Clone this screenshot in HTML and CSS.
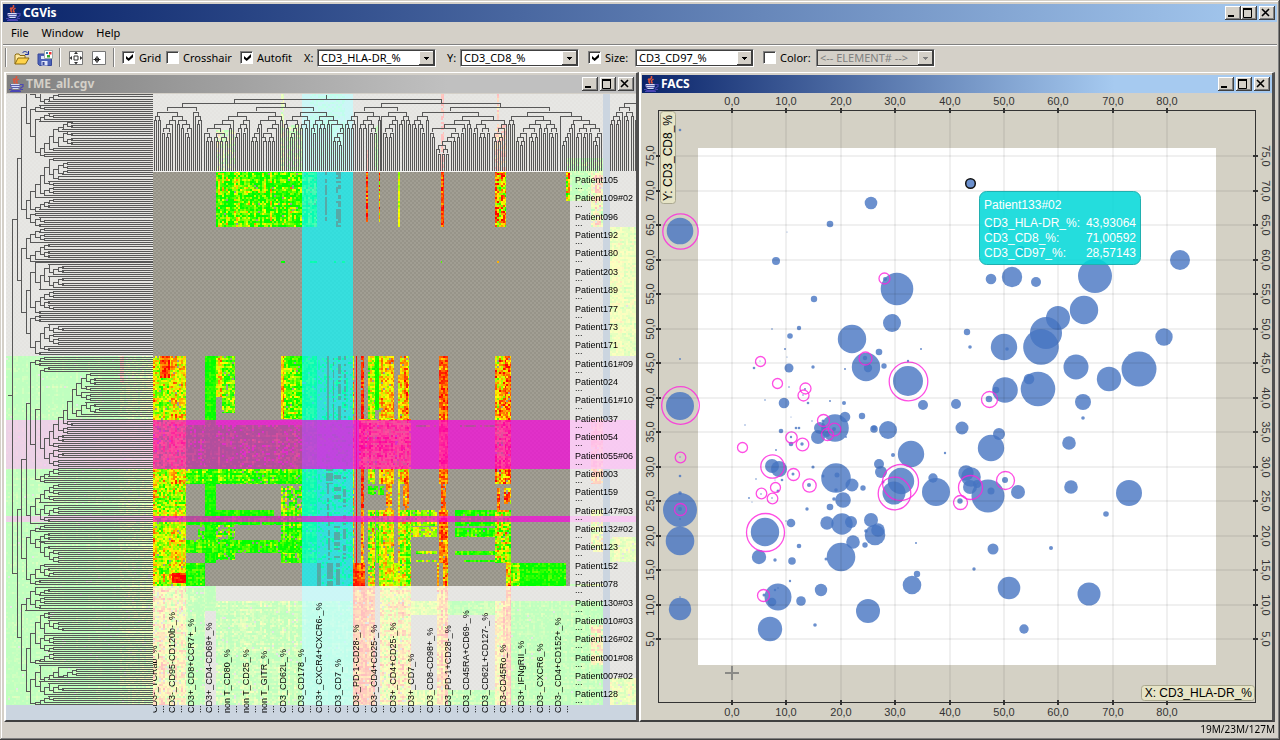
FILE: index.html
```html
<!DOCTYPE html>
<html lang="en">
<head>
<meta charset="utf-8">
<title>CGVis</title>
<link rel="stylesheet" href="styles.css">
</head>
<body>
<svg class="defs" width="0" height="0" aria-hidden="true">
  <symbol id="java" viewBox="0 0 16 16">
    <path d="M8.500 0v2L6 4.500v1.500l1 1.500M10.500 3 8.500 4.500v1.500l1 1.500M6.500 2.500 5 4" fill="none" stroke="#e0543a" stroke-width="1.500"/>
    <path d="M2 8h10v1.500l-1 3.500H4L2 10z" fill="#5a5fa8"/>
    <path d="M3 8.500h8.500M3.500 10.500h8M4.500 12.500h6" stroke="#d4dcf8"/>
    <path d="M12 8.500h3v2L12 12.500M1 13.500h2l1 1h7l2-1h2M2 15.500h11" fill="none" stroke="#4a46b4" stroke-width="1.200"/>
  </symbol>
</svg>
<div class="window">
  <header class="titlebar">
    <svg class="java"><use href="#java"/></svg>
    <h1>CGVis</h1>
    <div class="winbtns">
      <button aria-label="Minimize"><svg viewBox="0 0 12 10"><path d="M2 8h6" stroke="#000" stroke-width="2"/></svg></button><button aria-label="Maximize"><svg viewBox="0 0 12 10"><path d="M1.500 0v9.500h8V0" fill="none" stroke="#000"/><path d="M1 1h9" stroke="#000" stroke-width="2"/></svg></button><button class="apart" aria-label="Close"><svg viewBox="0 0 12 10"><path d="m2 1 7 7M9 1 2 8" stroke="#000" stroke-width="1.600"/></svg></button>
    </div>
  </header>
  <nav class="menu"><button>File</button><button>Window</button><button>Help</button></nav>
  <div class="toolbar">
    <span class="grip"></span>
    <button class="tool" aria-label="Open"><svg viewBox="0 0 16 16"><path d="M1 14V5l1-1h3l1 1.500h5V8" fill="#ffe9a0" stroke="#8a6a10"/><path d="M1 14 4 8h11l-3.500 6z" fill="#ffd34a" stroke="#8a6a10"/><path d="M8.500 3c1-2 4-2 5.500.500M14.500 1v3.500H11" fill="none" stroke="#1a2f9c"/></svg></button>
    <button class="tool" aria-label="Save image"><svg viewBox="0 0 16 16"><path d="M1 4h13.500v11.500H2.500L1 14z" fill="#4c62b8" stroke="#36479a"/><path d="M4 9h8v-3H4zM4.500 11h6v4.500h-6z" fill="#dfe5f8"/><path d="M5.500 12h2v3h-2z" fill="#36479a"/><path d="M7.500.500h8v8h-8z" fill="#fff" stroke="#9aa"/><path d="M9 2h2v2H9z" fill="#37a"/><path d="M12 2h2.500v2.500H12z" fill="#e33"/><path d="M10 5h3v2.500h-3z" fill="#3a3"/></svg></button>
    <span class="grip"></span>
    <button class="tool" aria-label="Fit to window"><svg viewBox="0 0 16 16"><path d="M1.500 1.500h13v13h-13z" fill="#fff" stroke="#777"/><path d="M6 6h4v4H6z" fill="none" stroke="#333"/><path d="M8 1.500 10 4H6zM8 14.500 10 12H6zM1.500 8 4 6v4zM14.500 8 12 6v4z" fill="#333"/></svg></button>
    <button class="tool" aria-label="Center"><svg viewBox="0 0 16 16"><path d="M1.500 1.500h13v13h-13z" fill="#fff" stroke="#777"/><path d="M6 6v7M2.500 9.500h7" stroke="#222"/><path d="M4.500 8h3v3h-3z" fill="none" stroke="#222"/></svg></button>
    <span class="grip wide"></span>
    <label class="check w43"><input type="checkbox" checked>Grid</label>
    <label class="check w74"><input type="checkbox">Crosshair</label>
    <label class="check w64"><input type="checkbox" checked>Autofit</label>
    <label class="axis" for="xsel">X:</label>
    <span class="combo"><select id="xsel"><option>CD3_HLA-DR_%</option></select></span>
    <label class="axis next" for="ysel">Y:</label>
    <span class="combo"><select id="ysel"><option>CD3_CD8_%</option></select></span>
    <label class="check size"><input type="checkbox" checked>Size:</label>
    <span class="combo"><select aria-label="Size"><option>CD3_CD97_%</option></select></span>
    <label class="check color"><input type="checkbox">Color:</label>
    <span class="combo off"><select aria-label="Color" disabled><option>&lt;-- ELEMENT# --&gt;</option></select></span>
  </div>
  <main class="desktop">
    <section class="frame">
      <header class="titlebar idle">
        <svg class="java"><use href="#java"/></svg>
        <h2>TME_all.cgv</h2>
        <div class="winbtns spaced">
          <button aria-label="Minimize"><svg viewBox="0 0 12 10"><path d="M2 8h6" stroke="#000" stroke-width="2"/></svg></button><button aria-label="Maximize"><svg viewBox="0 0 12 10"><path d="M1.500 0v9.500h8V0" fill="none" stroke="#000"/><path d="M1 1h9" stroke="#000" stroke-width="2"/></svg></button><button aria-label="Close"><svg viewBox="0 0 12 10"><path d="m2 1 7 7M9 1 2 8" stroke="#000" stroke-width="1.600"/></svg></button>
        </div>
      </header>
      <div class="view">
        <canvas id="heat" width="630" height="626"></canvas>
        <svg id="labels" viewBox="6 94 630 626" preserveAspectRatio="xMinYMin slice"></svg>
      </div>
    </section>
    <section class="frame">
      <header class="titlebar short">
        <svg class="java"><use href="#java"/></svg>
        <h2>FACS</h2>
        <div class="winbtns spaced">
          <button aria-label="Minimize"><svg viewBox="0 0 12 10"><path d="M2 8h6" stroke="#000" stroke-width="2"/></svg></button><button aria-label="Maximize"><svg viewBox="0 0 12 10"><path d="M1.500 0v9.500h8V0" fill="none" stroke="#000"/><path d="M1 1h9" stroke="#000" stroke-width="2"/></svg></button><button aria-label="Close"><svg viewBox="0 0 12 10"><path d="m2 1 7 7M9 1 2 8" stroke="#000" stroke-width="1.600"/></svg></button>
        </div>
      </header>
      <div class="view">
        <svg id="scatter" viewBox="641 94 631 626" preserveAspectRatio="xMinYMin slice"></svg>
      </div>
    </section>
  </main>
  <footer class="status">19M/23M/127M</footer>
</div>
<script src="app.js"></script>
</body>
</html>
```
FILE: styles.css
```css
* { box-sizing: border-box; }
body { margin: 0; background: #d4d0c8; font-family: "Noto Sans", sans-serif; font-size: 11px; color: #000; }
button { font: inherit; color: inherit; background: none; border: 0; padding: 0; }
h1, h2 { margin: 0; font-size: 12px; line-height: 18px; font-weight: 700; flex: 1; }
.defs { position: absolute; }
.window { height: 100vh; min-height: 400px; display: flex; flex-direction: column; padding: 4px 3px 2px; box-shadow: inset -1px -1px #404040, inset 1px 1px #d4d0c8, inset -2px -2px #808080, inset 2px 2px #fff; }
.titlebar { flex: none; display: flex; align-items: center; height: 18px; color: #fff; background: linear-gradient(90deg, #0a246a, #a6caf0); }
.titlebar.idle { color: #d4d0c8; background: linear-gradient(90deg, #808080, #c0c0c0 70%); }
.titlebar.short { background: linear-gradient(90deg, #0a246a, #a6caf0 75%); }
.java { width: 16px; height: 16px; margin: 0 2px; flex: none; }
.frame .java { margin: 0 2px 0 1px; }
.winbtns { display: flex; padding-right: 2px; }
.winbtns.spaced { gap: 2px; }
.winbtns button { width: 16px; height: 14px; padding: 2px 1px; background: #d4d0c8; box-shadow: inset -1px -1px #404040, inset 1px 1px #fff, inset -2px -2px #808080; }
.winbtns svg { display: block; width: 12px; height: 10px; }
.winbtns .apart { margin-left: 2px; }
.menu { flex: none; display: flex; gap: 13px; height: 22px; padding: 0 0 2px 8px; }
.toolbar { flex: none; display: flex; align-items: center; height: 27px; padding: 0 2px 1px; margin-bottom: 1px; border-top: 1px solid #808080; box-shadow: inset 0 1px #fff; white-space: nowrap; overflow: hidden; }
.grip { flex: none; width: 2px; height: 19px; background: #808080; border-right: 1px solid #fff; }
.grip.wide { margin: 0 7px; }
.tool { flex: none; width: 16px; height: 16px; margin-left: 7px; }
.tool + .grip { margin-left: 6px; }
.tool svg { display: block; width: 16px; height: 16px; }
.check { flex: none; display: flex; align-items: center; gap: 4px; }
.w43 { width: 44px; }
.w74 { width: 74px; }
.w64 { width: 64px; }
.size { width: 47px; margin-left: 9px; }
.color { width: 53px; margin-left: 9px; }
.axis { flex: none; width: 13px; }
.axis.next { margin-left: 11px; }
.check input { appearance: none; flex: none; width: 13px; height: 13px; margin: 0; padding: 3px; background: #fff; border: 1px solid; border-color: #808080 #fff #fff #808080; box-shadow: inset 1px 1px #404040; }
.check input:checked::before { content: ""; display: block; width: 7px; height: 7px; margin: -1px 0 0; background: #000; clip-path: polygon(0 28%, 38% 62%, 100% 0, 100% 45%, 38% 100%, 0 68%); }
.combo { flex: none; position: relative; width: 119px; height: 18px; border: 1px solid; border-color: #808080 #fff #fff #808080; }
.combo select { appearance: none; display: block; width: 100%; height: 16px; padding: 0 0 0 2px; background: #fff; color: #000; opacity: 1; border: 1px solid #404040; border-radius: 0; font: inherit; line-height: 13px; }
.combo::after { content: ""; position: absolute; top: 1px; right: 1px; width: 15px; height: 14px; pointer-events: none; background: linear-gradient(#000, #000) 5px 6px / 5px 1px no-repeat, linear-gradient(#000, #000) 6px 7px / 3px 1px no-repeat, linear-gradient(#000, #000) 7px 8px / 1px 1px no-repeat, #d4d0c8; box-shadow: inset -1px -1px #404040, inset 1px 1px #fff; }
.combo.off select { background: #d4d0c8; color: #808080; }
.combo.off::after { background: linear-gradient(#808080, #808080) 5px 6px / 5px 1px no-repeat, linear-gradient(#808080, #808080) 6px 7px / 3px 1px no-repeat, linear-gradient(#808080, #808080) 7px 8px / 1px 1px no-repeat, #d4d0c8; }
.desktop { flex: 1; min-height: 0; display: grid; grid-template-columns: 635fr 636fr; margin: 0 2px 0 1px; }
.frame { min-width: 0; min-height: 0; display: flex; flex-direction: column; border: solid; border-width: 1px 3px 2px 2px; border-color: #fff #505050 #404040 #fff; padding-top: 2px; }
.frame .titlebar { margin: 0 0 1px 1px; }
.view { flex: 1; min-height: 0; display: grid; background: #d4d1c5; overflow: hidden; }
.view > * { grid-area: 1 / 1; width: 100%; height: 100%; min-width: 0; min-height: 0; }
.view canvas { object-fit: cover; object-position: left top; }
.status { flex: none; height: 16px; font-size: 10px; line-height: 14px; text-align: right; padding-right: 2px; }
svg text { font-family: "Liberation Sans", sans-serif; }
.small { font-size: 9px; fill: #000; }
.tick { font-size: 11px; fill: #333; text-anchor: middle; }
.name { font-size: 12px; fill: #000; }
.tip { font-size: 12px; fill: #fff; }
.end { text-anchor: end; }
.dot { fill: #4674c2; fill-opacity: .8; }
.picked { stroke: #111; stroke-width: 1.5; }
.ring { fill: none; stroke: #ff22dd; stroke-opacity: .8; stroke-width: 1.3; }
```
FILE: app.js
```js
(function () {
/* Seeded generator keeps the drawing stable between loads */
let seed = 7;
function rnd() {
  seed = (seed * 1664525 + 1013904223) % 4294967296;
  return seed / 4294967296;
}

const ctx = document.getElementById('heat').getContext('2d');
ctx.translate(-6, -94);

function fill(style, x0, y0, x1, y1) {
  ctx.fillStyle = style;
  ctx.fillRect(x0, y0, x1 - x0, y1 - y0);
}

/* Missing values: woven grey ground */
fill('#a19e93', 6, 94, 636, 720);
ctx.fillStyle = '#979489';
for (let y = 94; y < 720; y += 2) {
  for (let x = 6 + (y / 2 % 2) * 2; x < 636; x += 4) ctx.fillRect(x, y, 2, 2);
}

function ramp(v) {
  v = Math.max(0, Math.min(1, v));
  const r = v < 0.5 ? Math.round(510 * v) : 255;
  const g = v < 0.5 ? 255 : Math.round(510 * (1 - v));
  return 'rgb(' + r + ',' + g + ',0)';
}

/* x0, y0, x1, y1, mean, spread, share of missing cells */
const blocks = [
  [216,171,317,227,.1,.7,.02],[366,171,368,222,.85,.5,0],[379,171,380,222,.6,.8,0],[398,171,400,227,.45,.3,0],
  [441,171,444,227,.9,.3,0],[495,171,506,227,.55,.8,0],[566,171,570,201,.35,.8,0],[570,171,591,201,.08,.4,.02],
  [591,171,603,227,.5,.8,.1],[610,227,636,356,.36,.3,.01],
  [281,261,285,263,0,.1,0],[310,261,317,263,0,.1,.3],[334,261,336,263,0,.1,0],[342,261,345,263,.1,.3,0],
  [441,261,442,263,.2,.1,0],[497,261,499,263,.6,.1,0],
  [153,356,186,586,.42,.55,.03],[160,356,170,378,.85,.3,0],[153,484,186,510,.3,.6,.4],
  [205,356,216,563,.04,.2,0],[216,356,222,397,.5,.5,0],[222,356,235,413,.12,.5,.05],[281,356,284,419,.7,.4,0],
  [284,356,302,419,.12,.55,.03],[302,356,317,563,.06,.35,.05],[318,356,353,586,.05,.3,.75],
  [353,356,354,586,.5,.5,.1],[356,356,357,586,1,.1,0],[361,356,364,510,.85,.3,.05],[368,356,375,484,.4,.5,.04],
  [375,356,379,410,.03,.1,0],[379,356,394,484,.6,.4,.04],[398,375,400,586,.5,.4,.1],[400,356,409,484,.65,.5,.03],
  [439,356,448,484,.82,.35,0],[441,484,446,510,.8,.3,.1],[495,356,506,484,.62,.6,.02],[506,356,511,484,.75,.5,.02],
  [186,425,302,469,.02,.35,.12],[359,419,411,469,.65,.5,.08],
  [416,425,436,427,.1,.4,.2],[460,425,495,427,.05,.2,.1],
  [186,469,302,484,.1,.5,.03],[281,486,302,512,.18,.6,.35],[368,486,384,495,.1,.3,.3],[386,484,392,510,.7,.4,.1],
  [403,484,409,510,.75,.3,.1],[497,488,500,510,.8,.4,.1],[504,488,511,504,.7,.5,.1],
  [216,510,274,516,.04,.2,0],[186,516,302,525,.04,.25,.08],[216,525,235,540,.15,.6,.35],[281,510,302,563,.15,.5,.06],
  [198,525,205,540,.05,.4,.5],[186,540,302,553,.1,.4,.05],[216,553,235,560,.2,.5,.2],
  [361,510,364,563,.7,.4,.05],[368,510,375,586,.45,.6,.02],[376,510,379,563,.1,.3,.1],[379,510,394,586,.4,.5,.02],
  [400,510,411,586,.35,.6,.02],[411,510,437,526,.35,.4,.08],[411,527,437,537,.35,.4,.15],
  [439,510,448,563,.75,.4,.02],[455,510,495,526,.05,.3,.05],[455,528,495,537,.08,.4,.05],[495,510,511,563,.35,.7,.02],
  [416,551,437,554,.3,.5,.1],[455,551,495,555,.05,.3,0],[416,560,437,562,.3,.5,.1],[464,560,495,562,.05,.3,0],
  [172,573,186,583,.95,.2,0],[186,563,205,586,.03,.35,0],[353,563,365,586,.88,.3,0],[394,563,398,586,.4,.3,0],
  [437,563,439,586,.6,.5,0],[443,563,448,586,.75,.5,0],[506,563,511,586,.7,.6,0],[511,563,520,586,.3,.5,0],
  [520,563,566,586,.01,.3,0],
  [216,130,235,171,.3,.8,.4],[281,94,284,171,.35,.6,.1],[287,125,302,171,.1,.5,.3],[310,94,345,171,.03,.2,.5],
  [366,150,368,171,.9,.2,0],[375,125,379,170,.05,.3,.1],[441,94,444,171,.95,.2,.2],[497,94,499,171,.9,.4,.1],
  [495,125,506,171,.8,.4,.3],[566,158,603,171,.1,.5,.1],
  [153,586,186,705,.55,.6,.05],[186,588,205,705,.06,.4,.03],[205,586,216,611,.04,.2,0],[216,601,353,705,.12,.45,.02],
  [353,586,375,705,.85,.4,.03],[380,586,411,705,.55,.6,.03],[411,601,437,615,.35,.3,0],[411,690,437,705,.35,.3,0],
  [437,586,448,705,.7,.5,.03],[448,601,495,615,.08,.3,0],[448,690,495,705,.1,.4,0],[495,601,506,705,.65,.5,.03],
  [506,586,511,705,.8,.4,0],[511,601,603,705,.04,.3,.01],[591,625,603,665,.6,.5,.1],
  [591,419,603,484,.8,.4,.1],[591,510,603,552,.4,.5,.1],[570,584,603,586,.2,.5,0],[610,537,636,562,.36,.3,.05],[610,678,636,705,.36,.4,.05],
  [6,356,120,705,0,.3,.01],[120,356,153,705,.22,.4,.02],[120,356,124,382,.9,.3,0]
];
for (const [x0, y0, x1, y1, mean, spread, gap] of blocks) {
  const cols = [];
  for (let x = x0; x < x1; x += 2) cols.push((rnd() - 0.5) * spread * 0.6);
  for (let y = y0; y < y1; y += 2) {
    const row = (rnd() - 0.5) * spread * 0.5;
    for (let x = x0, i = 0; x < x1; x += 2, i++) {
      if (rnd() < gap) continue;
      ctx.fillStyle = ramp(mean + cols[i] + row + (rnd() - 0.5) * spread);
      ctx.fillRect(x, y, Math.min(2, x1 - x), Math.min(2, y1 - y));
    }
  }
}

/* Margins and tracks */
const slate = '#cbd5e0';
fill('rgba(10,251,253,.7)', 302, 94, 353, 705);
for (const [x0, y0, x1, y1, share] of [
  [325,171,327,221,.9],[336,171,338,227,.6],[338,171,341,227,.7],
  [327,356,329,420,1],[333,356,334,420,.8],[338,356,341,420,.6],[344,356,346,420,.5],
  [326,469,333,484,.8],[327,484,329,522,.7],[334,469,341,500,.5],[343,469,346,563,.4],
  [328,522,330,563,.5],[334,522,340,563,.5],[317,563,321,586,1],[327,563,333,586,.9],[336,563,340,586,.8]
]) {
  for (let y = y0; y < y1; y += 2) {
    if (rnd() < share) fill('rgba(98,152,150,.75)', x0, y, x1, Math.min(y + 2, y1));
  }
}
const veil = 'rgba(255,255,255,.75)';
const pink = 'rgba(252,3,224,.7)';
fill(pink, 6, 420, 636, 469);
fill(pink, 6, 516, 636, 522);
fill(veil, 6, 94, 153, 720);
fill(veil, 153, 94, 570, 171);
fill(veil, 153, 586, 570, 720);
fill(veil, 570, 94, 636, 720);
fill(slate, 6, 705, 636, 720);
fill(slate, 603, 94, 610, 420);
fill(slate, 603, 469, 610, 516);
fill(slate, 603, 522, 610, 705);

/* Dendrograms; `cuts` holds the first splits as [position, left, right] */
ctx.fillStyle = '#585858';
function tree(a, b, level, cuts, o) {
  const p = Math.round(o.start + level * o.step);
  if (b - a <= o.leaf * 1.5 || p > o.limit) {
    for (let q = a; q < b - 1 || q === a; q += o.leaf) {
      const s = Math.round(q);
      o.bar(p - o.step, s, o.end, s + 1);
    }
    return Math.round(b - a <= o.leaf * 1.5 ? a : (a + b) / 2);
  }
  let cut, l, r;
  if (cuts) [cut, l, r] = cuts;
  else {
    const f = rnd();
    const n = (b - a) / o.leaf;
    if (n > 4 && f < o.skew) cut = f < o.skew * 0.7 ? b - (b - a) * (0.05 + rnd() * 0.2) : a + (b - a) * (0.05 + rnd() * 0.2);
    else cut = a + (b - a) * (0.35 + rnd() * 0.3);
    cut = a + Math.max(1, Math.round((cut - a) / o.leaf)) * o.leaf;
  }
  const c1 = tree(a, cut, level + 1, l, o);
  const c2 = tree(cut, b, level + 1, r, o);
  o.bar(p, c1, p + 1, c2 + 1);
  o.bar(p, c1, p + o.step, c1 + 1);
  o.bar(p, c2, p + o.step, c2 + 1);
  return Math.round((c1 + c2) / 2);
}
const rowsTree = { start: 12, step: 4.6, leaf: 2.05, end: 153, limit: 130, skew: 0.72,
  bar: (x0, y0, x1, y1) => ctx.fillRect(Math.round(x0), y0, Math.round(x1) - Math.round(x0), y1 - y0) };
tree(76, 705, 0, [357,
  [228, [158, null, null], [262, null, null]],
  [587, [525, [484, null, null], null], [612, null, [665, null, null]]]
], rowsTree);
fill('#585858', 8, 395, 12, 396);
const colsTree = { start: 99, step: 4.2, leaf: 2.05, end: 171, limit: 162, skew: 0.5,
  bar: (p0, a0, p1, a1) => { if (a0 < 636) ctx.fillRect(a0, Math.round(p0), a1 - a0, Math.round(p1) - Math.round(p0)); } };
tree(154, 603, 0, [345, [204, null, [284, null, null]], [412, [381, null, null], [508, [430, null, null], [560, null, null]]]], colsTree);
tree(610, 660, 1, null, colsTree);
fill('#585858', 326, 95, 327, 99);
fill('#f4f4f2', 153, 171, 570, 172);

/* SVG helpers */
function el(host, tag, attrs, text) {
  const n = document.createElementNS('http://www.w3.org/2000/svg', tag);
  for (const k in attrs) n.setAttribute(k, attrs[k]);
  if (text !== undefined) n.textContent = text;
  host.appendChild(n);
  return n;
}

const lab = document.getElementById('labels');
['105','109#02','096','192','180','203','189','177','173','171','161#09','024','161#10','037','054','055#06','003','159','147#03','132#02','123','152','078','130#03','010#03','126#02','001#08','007#02','128'].forEach((t, i) => {
  const y = Math.round(183 + i * 18.37);
  el(lab, 'text', { class: 'small', x: 575, y }, 'Patient' + t);
  el(lab, 'text', { class: 'small', x: 575, y: y + 6 }, '...');
});
const clip = el(lab, 'clipPath', { id: 'cols' });
el(clip, 'rect', { x: 153, y: 560, width: 417, height: 160 });
const colNames = el(lab, 'g', { 'clip-path': 'url(#cols)' });
['CD3-_TCRab_%','CD3-_CD95-CD120b-_%','CD3+_CD8+CCR7+_%','CD3+_CD4-CD69+_%','non T_CD80_%','non T_CD25_%','non T_GITR_%','CD3_CD62L_%','CD3_CD178_%','CD3+_CXCR4+CXCR6-_%','CD3_CD7_%','CD3-_PD-1-CD28-_%','CD3-_CD4+CD25-_%','CD3+_CD4+CD25-_%','CD3+_CD7_%','CD3_CD8-CD98+_%','CD3_PD-1+CD28-_%','CD3_CD45RA+CD69-_%','CD3_CD62L+CD127-_%','CD3-CD45Ro_%','CD3+_IFNgRII_%','CD3-_CXCR6_%','CD3-_CD4+CD152+_%'].forEach((t, i) => {
  const x = Math.round(157 + i * 18.37);
  el(colNames, 'text', { class: 'small', transform: 'translate(' + x + ' 713) rotate(-90)' }, t);
  el(colNames, 'text', { class: 'small', transform: 'translate(' + (x + 7) + ' 713) rotate(-90)' }, '...');
});

/* Scatter plot */
const sc = document.getElementById('scatter');
const rect = (x, y, width, height, fillv, more) => el(sc, 'rect', Object.assign({ x, y, width, height, fill: fillv }, more));
rect(641, 94, 631, 626, '#d4d1c5');
rect(698, 148, 518, 517, '#fff');

const dots = [
[680,130,1.3],[680,231,13.3],[871,203,6.3],[830,224,3.3],[776,261,4],[897,289,16.3],[814,299,3.2],[892,323,9],[852,339,14.2],[799,328,2.2],[790,336,2.8],[772,329,.8],[785,349,1],[787,357,.6],[760,361,.6],[754,368,1.3],[789,368,4.5],[813,367,1.7],[845,369,1],[866,367,14.2],[865,358,2.2],[868,368,4.2],[879,352,3.3],[884,366,2.7],[921,349,1],[908,361,1.2],[908,381,15],[680,359,1],[787,232,.5],[789,387,.8],[885,279,2],
[680,406,14],[784,403,5.3],[765,400,.8],[808,403,1.3],[830,401,1],[844,403,2],[805,389,1],[803,395,.8],[781,431,2.3],[791,437,1.2],[791,444,2.3],[802,444,1.7],[796,428,1.3],[799,428,1.3],[776,450,.9],[812,421,.7],[791,417,.5],[745,425,.7],[823,421,1.5],[820,428,6],[835,428,13.8],[845,417,5.3],[818,437,7],[827,434,3],[834,429,2],[862,416,3.2],[874,428,2.6],[874,429,3.8],[888,430,9],[846,437,.9],[923,405,5],[956,404,5],[962,428,6.5],[893,455,2],[911,454,13.2],[945,453,1.2],[772,466,7],[779,469,8],[793,474,1.5],[809,485,2],[813,467,1.6],[782,480,1.3],[756,479,.8],[775,480,.5],[778,491,1.5],[772,498,.8],[761,494,.8],[749,498,.9],[752,502,.6],
[680,457,.7],[680,476,1.3],[680,493,1.8],[680,510,17],[680,509,2],[680,519,1],[680,541,14.3],[680,597,.8],[680,609,11.2],[836,478,14.8],[837,475,2.5],[823,476,1.5],[852,485,6.5],[863,488,2.7],[836,490,1.8],[834,499,1.8],[843,500,7.8],[830,507,3.3],[807,509,1.7],[786,521,.7],[791,523,4.3],[765,532,14.2],[827,523,6.7],[842,524,10.7],[851,522,6],[871,520,7],[875,535,10.3],[878,530,6.8],[866,531,1.8],[853,542,6.8],[865,545,2.7],[879,464,5],[881,472,6],[883,482,1.5],[901,481,13.2],[894,493,11.5],[933,478,4.7],[936,492,14],[966,473,7.7],[971,477,9.8],[970,487,7],[977,484,4],[960,501,2.7],
[759,557,7.2],[775,560,1.7],[792,561,3.8],[799,546,2.3],[826,559,1.5],[841,557,14.3],[916,543,1],[917,574,3.2],[912,585,9.3],[974,569,1.7],[790,581,1.2],[821,590,6.2],[764,595,1.5],[778,597,13.5],[772,602,4.3],[775,590,1.2],[778,588,.8],[801,601,4.8],[868,611,12],[770,629,12.2],[815,625,1.8],
[991,279,5.3],[1012,277,10.2],[1036,282,5],[1095,276,17],[1180,260,10],[1084,310,14.2],[1058,318,12],[1046,333,16],[1041,347,17.8],[967,332,3.2],[970,347,1.8],[1004,347,13.2],[1007,349,1.8],[1164,337,8.7],[1076,367,12.5],[1139,369,17.5],[1109,379,12.2],[1038,389,17.3],[1029,379,5.3],[1005,390,12.8],[996,390,3.3],[989,399,3.3],[1083,402,8],[1083,418,1.8],[999,434,6],[1069,443,6.8],[991,448,13.2],
[988,496,16.5],[991,491,3.5],[1005,480,3],[1018,492,7],[1071,487,6.8],[1129,493,13],[1106,514,2.8],[993,549,5.5],[1051,548,2],[1009,588,11.3],[1089,594,11.5],[1024,629,4.7],[995,229,6],[1021,251,5]
];
for (const [x, y, r] of dots) el(sc, 'circle', { class: 'dot', cx: x, cy: y, r });
el(sc, 'circle', { class: 'dot picked', cx: 970.5, cy: 183.5, r: 4.8 });

const rings = [[680,231,17.7],[884,278,5.5],[760,361,5],[865,358,6.5],[777,383,5],[805,388,5.5],[908,381,19.3],[680,405,18.8],[803,395,5.5],[823,420,6],[827,434,6],[834,429,6.3],[791,437,5.7],[802,444,6.3],[742,447,5],[680,457,5.3],[772,466,11.7],[793,474,6],[809,485,6.7],[775,487,5],[761,493,5.3],[772,498,5.3],[680,509,6],[765,532,19],[763,595,6],[900,482,18],[894,493,16.3],[970,487,12],[960,502,7],[989,399,8],[1005,480,9]];
for (const [x, y, r] of rings) el(sc, 'circle', { class: 'ring', cx: x + 0.5, cy: y + 0.5, r });

const line = 'rgba(0,0,0,.06)';
const dark = '#333';
for (let i = 0; i < 9; i++) {
  const x = Math.round(731 + i * 54.4);
  rect(x, 111, 2, 591, line);
  rect(x, 108, 2, 5, dark);
  rect(x, 700, 2, 5, dark);
  const t = i * 10 + ',0';
  el(sc, 'text', { class: 'tick', x: x + 1, y: 105 }, t);
  el(sc, 'text', { class: 'tick', x: x + 1, y: 716 }, t);
}
for (let i = 0; i < 15; i++) {
  const y = Math.round(638 - i * 34.5);
  rect(659, y, 597, 2, line);
  rect(656, y, 5, 2, dark);
  rect(1253, y, 5, 2, dark);
  const t = (i + 1) * 5 + ',0';
  el(sc, 'text', { class: 'tick', transform: 'translate(654 ' + (y + 1) + ') rotate(-90)' }, t);
  el(sc, 'text', { class: 'tick', transform: 'translate(1262 ' + (y + 1) + ') rotate(90)' }, t);
}
rect(658.5, 110.5, 597, 592, 'none', { stroke: dark });
rect(725, 672, 14, 2, '#8a8a86');
rect(731, 666, 2, 14, '#8a8a86');

rect(660.5, 111.5, 15, 92, '#e6e4c6', { rx: 3, stroke: '#aaa890' });
el(sc, 'text', { class: 'name', transform: 'translate(672 201) rotate(-90)' }, 'Y: CD3_CD8_%');
rect(1141.5, 685.5, 113, 15, '#e6e4c6', { rx: 3, stroke: '#aaa890' });
el(sc, 'text', { class: 'name end', x: 1252, y: 697 }, 'X: CD3_HLA-DR_%');

rect(979.5, 191.5, 161, 73, 'rgba(0,215,215,.86)', { rx: 7, stroke: '#20b0b0' });
el(sc, 'text', { class: 'tip', x: 984, y: 209 }, 'Patient133#02');
[['CD3_HLA-DR_%:', '43,93064'], ['CD3_CD8_%:', '71,00592'], ['CD3_CD97_%:', '28,57143']].forEach(([k, v], i) => {
  el(sc, 'text', { class: 'tip', x: 984, y: 227 + i * 15 }, k);
  el(sc, 'text', { class: 'tip end', x: 1136, y: 227 + i * 15 }, v);
});
})();
```
